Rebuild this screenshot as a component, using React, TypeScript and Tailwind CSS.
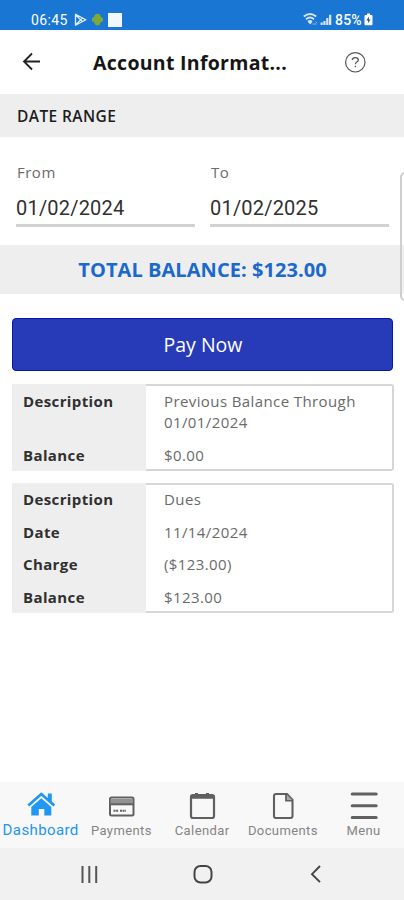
import type { ReactNode } from "react";

type Row = { label: string; value: string };

const records: Row[][] = [
  [
    { label: "Description", value: "Previous Balance Through 01/01/2024" },
    { label: "Balance", value: "$0.00" },
  ],
  [
    { label: "Description", value: "Dues" },
    { label: "Date", value: "11/14/2024" },
    { label: "Charge", value: "($123.00)" },
    { label: "Balance", value: "$123.00" },
  ],
];

function StatusBar() {
  return (
    <div className="flex h-[30px] items-start bg-[#1976d2] pt-[12px] font-['Roboto',sans-serif] text-white">
      <span className="ml-[31px] w-[43px] whitespace-nowrap text-[14px] leading-[16px] tracking-[0.35px]">06:45</span>
      <svg className="h-4 w-[13px]" viewBox="0 0 13 16" fill="none" stroke="#e3effb" strokeWidth="1.3" strokeLinejoin="round">
        <path d="M1.5 2.2 11.8 7.7 1.5 13.3ZM1.8 3 8.5 9.6M1.8 12.6 8.5 6" />
      </svg>
      <svg className="ml-[4px] h-4 w-[13px]" viewBox="0 0 13 16" fill="#7fa83a">
        <path d="M3.4 4.5Q3.6 2 6.5 1.8 9.4 2 9.6 4.5L12 6.3V9L9.6 10.6Q9.2 13.4 6.5 13.6 3.8 13.4 3.4 10.6L1 9V6.3Z" />
      </svg>
      <div className="ml-[4px] mt-px size-[14px] bg-[#f2f8ff]" />
      <svg className="ml-[181px] h-4 w-[15px]" viewBox="0 0 15 16" fill="none" stroke="#d5e5f7" strokeWidth="1.9">
        <path d="M.8 4.6Q7-.6 13.2 4.6M3 7.3Q7 3.9 11 7.3M5 9.7Q7 8.2 9 9.7" />
        <path d="M7.2 12.6 5 10h4.4Z" fill="#d5e5f7" stroke="none" />
        <path d="M9.5 12h4M12.5 9.5l1.4 1.5" strokeWidth="1" opacity=".6" />
      </svg>
      <svg className="ml-[2px] h-4 w-[13px]" viewBox="0 0 13 16" fill="#d5e5f7">
        <path d="M.6 10.5h2.2v2.5H.6ZM3.4 9h2.2v4H3.4ZM6.2 6h2.2v7H6.2ZM9 2.8h2.3V13H9Z" />
      </svg>
      <span className="ml-[2px] w-[29px] whitespace-nowrap text-[14px] font-medium leading-[16px] tracking-[0.2px]">85%</span>
      <svg className="h-4 w-[9px]" viewBox="0 0 9 16">
        <path d="M3 1.5h3V3h1.5q1 0 1 1v8.3q0 1-1 1h-6q-1 0-1-1V4q0-1 1-1H3Z" fill="#fff" />
        <path d="M5 4.5 2.4 8.5h1.8L3.8 11.4 6.6 7.5H4.9Z" fill="#31527c" />
      </svg>
    </div>
  );
}

function Header() {
  return (
    <div className="flex h-16 items-center">
      <svg className="ml-[22px] h-5 w-[19px]" viewBox="0 0 19 20" fill="none" stroke="#222" strokeWidth="1.8">
        <path d="M18 9.5H2M10 1.5 2 9.5l8 8" />
      </svg>
      <h1 className="ml-[52px] w-[252px] whitespace-nowrap pt-px text-[19.5px] font-bold tracking-[0.29px] text-[#151515]">Account Informat...</h1>
      <svg className="size-[21px]" viewBox="0 0 21 21" fill="none" stroke="#555">
        <circle cx="10.3" cy="10.3" r="9.7" strokeWidth="1.2" />
        <path d="M7.3 8Q7.4 5.6 10.3 5.6 13.3 5.6 13.3 8 13.3 9.2 11.8 10 10.4 10.8 10.4 12.3M10.4 13.7v1.5" strokeWidth="1.3" />
      </svg>
    </div>
  );
}

function DateField({ label, value }: { label: string; value: string }) {
  return (
    <div className="w-[179px]">
      <div className="h-[22px] pl-px text-[15px] leading-[22px] tracking-[0.5px] text-[#6b6b6b]">{label}</div>
      <div className="mt-[9px] h-[35px] border-b-[3px] border-[#d2d2d2] font-['Roboto',sans-serif] text-[20px] leading-[33px] tracking-[0.2px] text-[#303030]">
        {value}
      </div>
    </div>
  );
}

function Record({ rows }: { rows: Row[] }) {
  return (
    <div className="flex">
      <div className="w-[134px] bg-[#eeeeee]" />
      <div className="-ml-[134px] w-[382px]">
        {rows.map((row, i) => (
          <div key={row.label} className="flex">
            <div className="w-[134px] pt-[6.3px] pb-[4.9px] pl-[11px] text-[15px] font-bold leading-[21.4px] tracking-[0.38px] text-[#303030]">{row.label}</div>
            <div
              className={`w-[248px] border-r-2 border-[#d6d6d6] pl-[18px] pr-[20px] text-[15px] tracking-[0.4px] leading-[21.4px] text-[#6a6a6a] ${
                i === 0 ? "rounded-tr-[3px] border-t-2 pt-[4.3px] pb-[4.9px]" : "pt-[6.3px] pb-[4.9px]"
              } ${i === rows.length - 1 ? "rounded-br-[3px] border-b-2 !pb-[2.9px]" : ""}`}
            >
              {row.value}
            </div>
          </div>
        ))}
      </div>
    </div>
  );
}

function Tab({ label, active, children }: { label: string; active?: boolean; children: ReactNode }) {
  return (
    <div className={`flex w-[81px] flex-col items-center font-['Roboto',sans-serif] ${active ? "text-[#2196f3]" : "text-[#606060]"}`}>
      <svg className="mt-[8px] h-[30px] w-[30px]" viewBox="0 0 30 30" fill="none" stroke="currentColor" strokeWidth="2">
        {children}
      </svg>
      <span className={active ? "mt-px whitespace-nowrap text-[15px] leading-[18px] tracking-[0.4px]" : "mt-[2px] whitespace-nowrap text-[13px] leading-[18px] tracking-[0.4px] text-[#858585]"}>
        {label}
      </span>
    </div>
  );
}

function TabBar() {
  return (
    <div className="flex h-[66px] bg-[#f8f8f8] pl-[0.3px]">
      <Tab label="Dashboard" active>
        <path d="M2.3 15.5 15.3 4 28.3 15.5" strokeWidth="2.8" />
        <path d="M21.8 3.5h4v9l-4-3.5ZM15.3 8.2 25.3 17v8.5H18.3V19h-5.5v6.5H5.3V17Z" fill="currentColor" stroke="none" />
      </Tab>
      <Tab label="Payments">
        <rect x="4" y="7.5" width="23.5" height="18" rx="1.5" />
        <path d="M4.5 9H27v5H4.5Z" fill="#929292" stroke="none" />
        <path d="M4.5 14.3h23" />
        <path d="M7.5 20.7h5M14 20.7h6" strokeDasharray="2 .6" />
      </Tab>
      <Tab label="Calendar">
        <rect x="4" y="5" width="23" height="23" rx="2" strokeWidth="2.2" />
        <path d="M3.5 5.5h24v3.3h-24ZM8 3h3v3H8ZM19 3h3v3h-3Z" fill="currentColor" stroke="none" />
      </Tab>
      <Tab label="Documents">
        <path d="M8 4h11l5.5 6v16q0 2-2 2H8q-2 0-2-2V6q0-2 2-2Z" strokeWidth="2.1" />
        <path d="M18 4.5v6.2h6" strokeWidth="1.8" />
        <path d="M19 5v5h5Z" fill="#aaa" stroke="none" />
      </Tab>
      <Tab label="Menu">
        <path d="M3.2 4h24M3.2 15.8h24M3.2 27.5h24" strokeWidth="3" strokeLinecap="round" />
      </Tab>
    </div>
  );
}

export default function App() {
  return (
    <div className="relative flex h-[900px] w-[404px] flex-col overflow-hidden bg-white font-['Open_Sans',sans-serif]">
      <StatusBar />
      <Header />
      <div className="flex h-[43px] items-center bg-[#eeeeee] pl-[17px] pt-[2px] text-[15.5px] font-semibold text-[#1c1c1c]">
        <span className="tracking-[0.4px]">DATE RANGE</span>
      </div>
      <div className="flex h-[108px] gap-[15px] pl-4 pt-[24px]">
        <DateField label="From" value="01/02/2024" />
        <DateField label="To" value="01/02/2025" />
      </div>
      <div className="flex h-[49px] items-center justify-center bg-[#eeeeee] pl-px text-[20px] font-bold tracking-[0.06px] text-[#1b69cd]">
        <span className="whitespace-nowrap">TOTAL BALANCE: $123.00</span>
      </div>
      <button className="ml-[12px] mt-[24px] h-[53px] w-[381px] shrink-0 rounded-[4px] border border-[#0717a8] bg-[#273bb8] pl-px pt-px text-[19.5px] text-white">
        Pay Now
      </button>
      <div className="ml-[12px] mt-[13.4px] flex flex-col gap-[12px]">
        {records.map((rows, i) => (
          <Record key={i} rows={rows} />
        ))}
      </div>
      <div className="mt-auto">
        <TabBar />
        <div className="flex h-[52px] bg-[#f1f1f1]">
          <svg className="ml-[79px] mt-[15px] h-[22px] w-[20px]" viewBox="0 0 20 22" stroke="#555" strokeWidth="2">
            <path d="M3.5 3v17M10.3 3v17M17.2 3v17" />
          </svg>
          <svg className="ml-[93px] mt-[15px] size-[22px]" viewBox="0 0 22 22" fill="none" stroke="#444" strokeWidth="2">
            <rect x="2.5" y="3" width="17" height="16.5" rx="6" />
          </svg>
          <svg className="ml-[95px] mt-[15px] h-[22px] w-[14px]" viewBox="0 0 14 22" fill="none" stroke="#444" strokeWidth="1.9">
            <path d="M11 3 3 11.2l8 8" />
          </svg>
        </div>
      </div>
      <div className="absolute -right-[6px] top-[172px] h-[129px] w-[10px] rounded-[5px] border-2 border-[#cfcfcf] bg-white/20" />
    </div>
  );
}
